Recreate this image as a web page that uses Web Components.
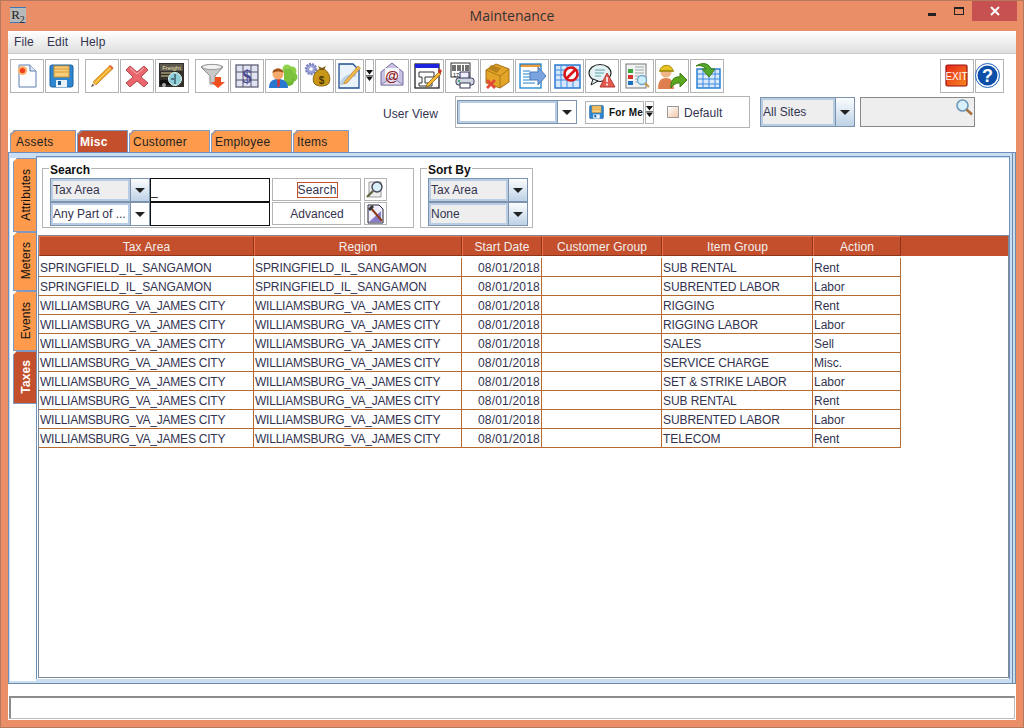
<!DOCTYPE html>
<html>
<head>
<meta charset="utf-8">
<title>Maintenance</title>
<style>
    html, body { margin: 0; padding: 0; width: 1024px; height: 728px; overflow: hidden; }
    body { font: 12px "Liberation Sans", Arial, sans-serif; color: #333; }
</style>
</head>
<body>
<app-window heading="Maintenance">
    <menu-bar></menu-bar>
    <main-toolbar></main-toolbar>
    <view-row></view-row>
    <tab-strip></tab-strip>
    <tab-panel>
        <side-tabs slot="side"></side-tabs>
        <search-bar></search-bar>
        <data-grid></data-grid>
    </tab-panel>
    <status-bar></status-bar>
</app-window>

<script>
const floppy = `<rect x="5" y="6" width="23" height="22" rx="2" fill="#2e86d0" stroke="#17609f"/><rect x="9" y="7" width="15" height="11" fill="#f8cf7e" stroke="#c98f30"/><path d="M10 10h13M10 13h13" stroke="#d9952f"/><rect x="11" y="21" width="11" height="7" fill="#e8f0f8"/><rect x="13" y="22" width="3" height="4" fill="#17609f"/>`;
const ICONS = {
    create: `<path d="M9 6h11l6 6v16H9z" fill="#fbfcff" stroke="#5d7fae"/><path d="M20 6v6h6" fill="#dfe8f4" stroke="#5d7fae"/><circle cx="12.5" cy="11.5" r="4.6" fill="#ffb066"/><circle cx="12.5" cy="11.5" r="2.6" fill="#ef3f1f"/>`,
    save: floppy,
    edit: `<path d="M8 23L25 6.5l3 3L11 26z" fill="#f5a81f" stroke="#a8660a" stroke-width=".6"/><path d="M24 7.5l3 3 1.5-1.5-3-3z" fill="#e9603c"/><path d="M8 23l3 3-5 2z" fill="#ead0a8"/><path d="M6 28l1.6-3 1.4 1.4z" fill="#444"/><path d="M10 24L26 8.5" stroke="#fde08a"/>`,
    remove: `<path d="M10 7l7 6 7-6 4 4-7 7 7 6-4 4-7-6-7 6-4-4 7-6-7-7z" fill="#e8666c" stroke="#b24b50"/><path d="M10 9l7 6 7-6" fill="none" stroke="#f6b3b3"/>`,
    freight: `<rect x="4" y="4" width="25" height="24" fill="#33302b"/><rect x="5" y="5" width="23" height="7" fill="#5c584e"/><text x="16.5" y="10.5" font-family="Liberation Sans" font-size="6" fill="#eee6b8" text-anchor="middle">Freight</text><path d="M6 14h12M6 17h10" stroke="#d8cf95"/><rect x="5" y="21" width="13" height="5" fill="#111"/><circle cx="20" cy="20" r="6.5" fill="#8fd0d8" stroke="#e6f4f5"/><path d="M20 15v10M16 20h3" stroke="#123" fill="none"/><circle cx="9" cy="26" r="2" fill="#aaa"/>`,
    funnel: `<path d="M6 8c3-3 20-3 22 0L20 17v8h-5v-8z" fill="#c9c9c9" stroke="#8c8c8c"/><ellipse cx="17" cy="8" rx="10" ry="2.6" fill="#f2f2f2" stroke="#999"/><path d="M20 18h6v5h4l-7 6-7-6h4z" fill="#f1501e"/>`,
    money: `<rect x="6" y="6" width="22" height="22" fill="#e1e2f2" stroke="#55556b" stroke-width="1.2"/><path d="M13 6v22M21 6v22M6 13h22M6 21h22" stroke="#55556b"/><text x="17" y="24" font-family="Liberation Serif" font-weight="700" font-size="19" fill="#4a4a8f" text-anchor="middle">$</text>`,
    people: `<circle cx="22" cy="10" r="4.5" fill="#92d450"/><circle cx="27" cy="12" r="4.5" fill="#8bcf46"/><circle cx="28" cy="18" r="4.5" fill="#7cc23c"/><circle cx="24" cy="22" r="5" fill="#6fb531"/><rect x="19" y="10" width="8" height="13" fill="#7cc23c"/><path d="M4 29c0-7 4-9 9-9s10 2 10 9z" fill="#2878d0"/><path d="M12 20h3l-.5 8h-2z" fill="#d33"/><circle cx="13" cy="15" r="5.5" fill="#f4ab6c"/><path d="M7.5 14c0-6 11-6 11 0-3-2-8-2-11 0z" fill="#a0521d"/>`,
    charges: `<circle cx="11" cy="10" r="5" fill="#9ca4d8" stroke="#7a82bc" stroke-dasharray="2 1" stroke-width="2.4"/><circle cx="11" cy="10" r="1.8" fill="#fff"/><path d="M20 10c-6 3-8 9-6 14 2 4 13 4 15 0 2-5 0-11-5-14z" fill="#c99718" stroke="#8a6510"/><path d="M18 7l4 2 4-2-2 4h-4z" fill="#7a5a12"/><text x="21.5" y="25" font-family="Liberation Sans" font-weight="700" font-size="10" fill="#4b3505" text-anchor="middle">$</text>`,
    note: `<path d="M4 5h14l6 6v18H4z" fill="#eaf3fb" stroke="#1f4f92" stroke-width="1.3"/><path d="M6 26c2-8 8-10 15-10" fill="none" stroke="#b9d2e6" stroke-width="3"/><path d="M10 22L23 7l2.5 2L12 24l-3.5 1z" fill="#f0b850" stroke="#a8701b" stroke-width=".6"/>`,
    mail: `<path d="M6 13L17 4l11 9v13H6z" fill="#c9c2e3" stroke="#6e6a9c"/><rect x="10" y="9" width="14" height="10" fill="#f8f8fb"/><path d="M6 26l11-8 11 8z" fill="#e2ddf0" stroke="#8c88b0"/><text x="17" y="22" font-family="Liberation Sans" font-weight="700" font-size="14" fill="#8e2020" text-anchor="middle">@</text>`,
    form: `<rect x="5" y="5" width="24" height="24" fill="#fff" stroke="#111" stroke-width="1.2"/><rect x="5" y="5" width="24" height="4" fill="#1d24dc"/><path d="M9 13h15v5h-9v6h7v3H9v-3h3v-6H9z" fill="#fff" stroke="#333"/><path d="M17 25l12-12 2 2-12 12-3 1z" fill="#f2b632" stroke="#8a5a10" stroke-width=".7"/><path d="M28 12l2-2 2 2-2 3z" fill="#d02a1e"/>`,
    barcode: `<rect x="6" y="4" width="19" height="14" fill="#fff" stroke="#333"/><path d="M8 6v6M10 6v6M13 6v6M15 6v6M18 6v6M21 6v6M23 6v6" stroke="#111" stroke-width="1.2"/><text x="8" y="17.5" font-family="Liberation Sans" font-size="5.5" fill="#111">17</text><path d="M15 13h9v7h-9z" fill="#eef" stroke="#335"/><rect x="11" y="19" width="18" height="7" rx="2.5" fill="#cfd6e0" stroke="#335"/><rect x="15" y="24" width="10" height="5" fill="#fff" stroke="#335"/><circle cx="14" cy="22" r="1" fill="#1a9a4a"/>`,
    box: `<path d="M6 11l10-6 13 5v13l-9 6-14-5z" fill="#e3a528" stroke="#a36f12"/><path d="M6 11l14 6 9-7M20 17v12" fill="none" stroke="#ab7a18"/><path d="M11 6l10 3-4 5-9-4z" fill="#b8821c"/><path d="M8 20l3 3 3-3 2 2-3 3 3 3-2 2-3-3-3 3-2-2 3-3-3-3z" fill="#e44a3a"/>`,
    forward: `<path d="M5 5h21v3H5z" fill="#ef9a3a"/><rect x="5" y="5" width="21" height="24" fill="none" stroke="#1d82cb" stroke-width="1.3"/><path d="M8 12h7M8 15h7M8 18h7M8 21h7M8 24h12" stroke="#1d82cb"/><path d="M15 13h8V8l8 9-8 9v-5h-8z" fill="#7aa4e0" stroke="#4d77b8"/>`,
    blocked: `<rect x="5" y="6" width="25" height="23" fill="#d6e7fb" stroke="#1d70cc" stroke-width="1.4"/><path d="M5 11h25M5 16h25M5 21h25M11 6v23M17 6v23M23 6v23" stroke="#3b8ae0"/><circle cx="21" cy="15" r="6.5" fill="#fff" stroke="#d81518" stroke-width="2.6"/><path d="M16.5 19.5l9-9" stroke="#d81518" stroke-width="2.6"/>`,
    alert: `<ellipse cx="15" cy="14" rx="11" ry="8.5" fill="#e3f1f3" stroke="#222" stroke-width="1.1"/><path d="M8 20l-2 6 7-4z" fill="#e3f1f3" stroke="#222"/><path d="M10 11h10M10 14h9M10 17h6" stroke="#5ba5ad"/><path d="M22 14l8 14H15z" fill="#e05a50" stroke="#b43b32"/><path d="M22 18v5M22 24.5v2" stroke="#fff" stroke-width="1.6"/>`,
    report: `<rect x="6" y="5" width="20" height="24" fill="#f2f2f2" stroke="#777"/><rect x="8" y="10" width="5" height="4" fill="#38a83a"/><rect x="8" y="16" width="5" height="4" fill="#d8342c"/><rect x="8" y="22" width="5" height="4" fill="#1d70c0"/><path d="M15 8h9M15 11h9M15 14h9M15 17h4M15 20h3M15 23h3" stroke="#9aa"/><circle cx="22" cy="21" r="4.5" fill="#cfeefb" stroke="#6ca6c8" stroke-width="1.3"/><path d="M25 24l4 4" stroke="#c5964a" stroke-width="2"/>`,
    worker: `<path d="M3 30c0-8 3-11 8-11s7 3 8 11z" fill="#df7f4f"/><circle cx="11" cy="13" r="5.5" fill="#f0b587"/><path d="M5 12c0-7 12-8 13 0z" fill="#e7c320" stroke="#a08a10"/><path d="M4 12h15" stroke="#a08a10" stroke-width="1.4"/><path d="M16 29c-1-7 3-12 9-11v-4l7 7-7 7v-4c-3 0-7 1-9 5z" fill="#5aa820" stroke="#3f7d12"/>`,
    refresh: `<rect x="7" y="10" width="23" height="19" fill="#dbe9fb" stroke="#1d78cf" stroke-width="1.4"/><path d="M7 15h23M7 20h23M7 25h23M13 10v19M19 10v19M25 10v19" stroke="#3b8ae0"/><path d="M6 7c6-4 13-3 15 3h4l-6 8-7-8h4c-2-3-6-4-10-3z" fill="#54a92c" stroke="#3b7d1b"/>`,
    exit: `<defs><linearGradient id="ex" x1="0" y1="0" x2="1" y2="1"><stop offset="0" stop-color="#e8241c"/><stop offset="1" stop-color="#f58a1e"/></linearGradient></defs><rect x="6" y="6" width="21" height="21" rx="1.5" fill="url(#ex)" stroke="#9a0f10" stroke-width="1.2"/><text x="16.5" y="20.5" font-family="Liberation Sans" font-size="10" fill="#fff" text-anchor="middle">EXIT</text>`,
    help: `<circle cx="12.5" cy="16.5" r="12" fill="#fff" stroke="#1a62c0"/><circle cx="12.5" cy="16.5" r="10" fill="#0d4fa8"/><text x="12.5" y="22.5" font-family="Liberation Sans" font-weight="700" font-size="18" fill="#fff" text-anchor="middle">?</text>`
};

const triangles = `<svg width="7" height="12" viewBox="0 0 7 12"><path d="M0 0h7L3.5 4.5zM0 6.5h7L3.5 11z" fill="#111"/><path d="M0 5.5h7" stroke="#111" stroke-width=".6"/></svg>`;

const windowTemplate = document.createElement('template');
windowTemplate.innerHTML = `
    <style>
        :host { display: flex; flex-direction: column; width: 1024px; height: 728px; box-sizing: border-box;
            background: #e98e66; border: 1px solid #b5785c; }
        .title { display: flex; align-items: flex-start; height: 30px; flex: none; position: relative; }
        .logo { width: 16px; height: 16px; margin: 6px 0 0 9px; background: #b9b9b9; border-top: 1px solid #3c78b8; border-bottom: 1px solid #3c78b8;
            box-sizing: border-box; font: 13px/14px "Liberation Serif", serif; color: #222; text-align: center; }
        .name { position: absolute; left: 0; right: 0; top: 5px; text-align: center; font: 14px/20px "Open Sans", sans-serif; color: #333; }
        .caps { margin-left: auto; margin-right: 6px; display: flex; align-items: flex-start; }
        .min { width: 8px; height: 3px; background: #222; margin: 12px 0 0; }
        .max { width: 8px; height: 5px; border: 1px solid #222; border-top-width: 2px; margin: 6px 0 0 18px; }
        .close { width: 45px; height: 20px; background: #c75050; margin: 0 0 0 8px; display: flex; align-items: center; justify-content: center; }
        .client { flex: 1; margin: 0 7px 7px; background: #fff; display: flex; flex-direction: column; min-height: 0; }
    </style>
    <div class="title">
        <div class="logo">R<sub style="font-size:10px;line-height:0">2</sub></div>
        <div class="name"></div>
        <div class="caps">
            <div class="min"></div><div class="max"></div>
            <div class="close"><svg width="10" height="10" viewBox="0 0 10 10"><path d="M1 1l8 8M9 1l-8 8" stroke="#fff" stroke-width="2"/></svg></div>
        </div>
    </div>
    <div class="client"><slot></slot></div>
`;
class AppWindow extends HTMLElement {
    constructor() {
        super();
        this.attachShadow({ mode: 'open' }).append(windowTemplate.content.cloneNode(true));
    }
    connectedCallback() {
        this.shadowRoot.querySelector('.name').textContent = this.getAttribute('heading');
    }
}
customElements.define('app-window', AppWindow);

class MenuBar extends HTMLElement {
    constructor() {
        super();
        this.attachShadow({ mode: 'open' }).innerHTML = `
            <style>
                :host { display: flex; height: 22px; flex: none; background: linear-gradient(#fff, #dfdfdf); border-bottom: 1px solid #c9c9c9;
                    padding-left: 6px; gap: 13px; font: 12px/22px "Liberation Sans", sans-serif; color: #333350; letter-spacing: .15px; }
                span:last-child { margin-left: -1px; }
            </style>
            <span>File</span><span>Edit</span><span>Help</span>`;
    }
}
customElements.define('menu-bar', MenuBar);

class ToolBtn extends HTMLElement {
    constructor() {
        super();
        this.attachShadow({ mode: 'open' });
    }
    connectedCallback() {
        const w = this.getAttribute('w') || 34;
        this.shadowRoot.innerHTML = `
            <style>
                :host { display: block; flex: none; width: ${w}px; height: 34px; box-sizing: border-box; border: 1px solid #b4b4b4; background: #fff; }
                svg { display: block; margin: -1px; }
            </style>
            <svg width="${w}" height="34" viewBox="0 0 ${w} 34">${ICONS[this.getAttribute('icon')] || ''}</svg>`;
    }
}
customElements.define('tool-btn', ToolBtn);

class MainToolbar extends HTMLElement {
    constructor() {
        super();
        const group = names => names.split(' ').map(n => `<tool-btn icon="${n}"></tool-btn>`).join('');
        this.attachShadow({ mode: 'open' }).innerHTML = `
            <style>
                :host { display: flex; flex: none; height: 34px; padding: 5px 12px 1px 2px; gap: 1px; }
                .sep { margin-left: 5px; }
                .more { width: 9px; height: 34px; box-sizing: border-box; border: 1px solid #b4b4b4; display: flex; align-items: center; justify-content: center; }
                .end { margin-left: auto; }
            </style>
            ${group('create save')}
            <tool-btn class="sep" icon="edit"></tool-btn><tool-btn icon="remove"></tool-btn><tool-btn icon="freight"></tool-btn>
            <tool-btn class="sep" icon="funnel"></tool-btn>${group('money people charges')}
            <tool-btn icon="note" w="29"></tool-btn>
            <div class="more">${triangles}</div>
            ${group('mail form barcode box forward blocked alert report worker refresh')}
            <tool-btn class="end" icon="exit"></tool-btn>
            <tool-btn icon="help" w="29"></tool-btn>`;
    }
}
customElements.define('main-toolbar', MainToolbar);

class ComboBox extends HTMLElement {
    constructor() {
        super();
        this.attachShadow({ mode: 'open' });
    }
    connectedCallback() {
        const plain = this.hasAttribute('plain');
        this.shadowRoot.innerHTML = `
            <style>
                :host { display: flex; flex: none; box-sizing: border-box; height: 24px; border: 1px solid #7d93ad; background: #fff; font: 12px "Liberation Sans", sans-serif; color: #333350; }
                .field { flex: 1; min-width: 0; box-sizing: border-box; border: 2px solid #b8cde4; background: ${plain ? '#fff' : '#eee'};
                    display: flex; align-items: center; white-space: nowrap; overflow: hidden; }
                .arrow { flex: none; box-sizing: border-box; width: 19px; border-left: 1px solid #7d93ad; background: ${plain ? '#fff' : 'linear-gradient(#fbfdfe, #bdd1e6)'};
                    display: flex; align-items: center; justify-content: center; }
                .arrow i { width: 0; height: 0; border: 5px solid transparent; border-top-color: #222; border-bottom: 0; }
            </style>
            <div class="field">${this.getAttribute('value') || ''}</div>
            <div class="arrow"><i></i></div>`;
    }
}
customElements.define('combo-box', ComboBox);

class ViewRow extends HTMLElement {
    constructor() {
        super();
        this.attachShadow({ mode: 'open' }).innerHTML = `
            <style>
                :host { display: flex; flex: none; height: 32px; padding: 2px 0; font: 12px "Liberation Sans", sans-serif; color: #333350; }
                .label { margin-left: 375px; width: 72px; line-height: 36px; letter-spacing: .05px; }
                .box { box-sizing: border-box; width: 295px; height: 32px; border: 1px solid #b4b4b4; display: flex; align-items: center; padding-left: 1px; }
                .box combo-box { width: 120px; }
                .forme { margin-left: 8px; width: 59px; height: 23px; box-sizing: border-box; border: 1px solid #b4b4b4; padding-left: 3px; display: flex; align-items: center; font: bold 10px "Liberation Sans", sans-serif; letter-spacing: .2px; color: #111; white-space: nowrap; }
                .forme svg { margin-right: 5px; flex: none; }
                .more { margin-left: 1px; width: 9px; height: 23px; box-sizing: border-box; border: 1px solid #b4b4b4; display: flex; align-items: center; justify-content: center; }
                .check { margin-left: 13px; width: 12px; height: 12px; box-sizing: border-box; border: 1px solid #9a9a9a; background: linear-gradient(135deg, #fff, #f2c7a8); }
                .dft { margin: 2px 0 0 5px; letter-spacing: .05px; }
                .sites { margin: 1px 0 0 10px; width: 95px; height: 30px; }
                .find { margin: 1px 0 0 5px; width: 115px; height: 30px; box-sizing: border-box; border: 1px solid #888; background: #eee; display: flex; justify-content: flex-end; }
            </style>
            <div class="label">User View</div>
            <div class="box">
                <combo-box plain></combo-box>
                <div class="forme"><svg width="15" height="16" viewBox="4 5 25 24">${floppy}</svg>For Me</div>
                <div class="more">${triangles}</div>
                <div class="check"></div><div class="dft">Default</div>
            </div>
            <combo-box class="sites" value="All Sites"></combo-box>
            <div class="find"><svg width="19" height="19" viewBox="0 0 19 19"><circle cx="7.5" cy="7.5" r="5.5" fill="#d8f0fb" stroke="#6f98b8" stroke-width="1.6"/><path d="M11.5 11.5l5.5 5" stroke="#a6703a" stroke-width="2.6"/></svg></div>`;
    }
}
customElements.define('view-row', ViewRow);

class TabStrip extends HTMLElement {
    constructor() {
        super();
        const tabs = [['Assets', 66, 5], ['Misc', 51, 2, true], ['Customer', 81, 3], ['Employee', 81, 3], ['Items', 56, 3]];
        this.attachShadow({ mode: 'open' }).innerHTML = `
            <style>
                :host { display: flex; flex: none; height: 22px; padding-left: 2px; gap: 1px; font: 12px "Liberation Sans", sans-serif; color: #222; letter-spacing: .25px; }
                .tab { box-sizing: border-box; height: 22px; padding-top: 4px; background: #fd9a4c; border: 1px solid #7d99c4; border-bottom: 0; clip-path: polygon(4px 0, 100% 0, 100% 100%, 0 100%, 0 4px); position: relative; }
                .tab.on { background: #c44f2d; color: #fff; font-weight: bold; }
                .tab::before { content: ""; position: absolute; left: -1px; top: 1px; width: 6px; height: 1px; background: #7d99c4; transform: rotate(-45deg); }
            </style>
            ${tabs.map(([t, w, p, on]) => `<div class="tab${on ? ' on' : ''}" style="width:${w}px;padding-left:${p}px">${t}</div>`).join('')}`;
    }
}
customElements.define('tab-strip', TabStrip);

const panelTemplate = document.createElement('template');
panelTemplate.innerHTML = `
    <style>
        :host { display: flex; flex: none; height: 532px; box-sizing: border-box; background: #c9ddf3;
            border: 1px solid #6d8ebd; border-right-color: #6f8aa6; border-bottom-color: #6f8aa6; padding: 3px 3px 2px 1px;
            box-shadow: inset -2px 0 0 #c9ddf3, inset -3px 0 0 #6f8aa6; }
        .side { width: 26px; flex: none; background: #fff; margin-top: 2px; }
        .body { flex: 1; min-width: 0; display: flex; flex-direction: column; background: #fff; border: 1px solid #6d8ebd; border-bottom: 0;
            margin: 0 2px 2px 0; padding-left: 1px; box-shadow: inset 0 1px 0 #c9ddf3; }
    </style>
    <div class="side"><slot name="side"></slot></div>
    <div class="body"><slot></slot></div>
`;
class TabPanel extends HTMLElement {
    constructor() {
        super();
        this.attachShadow({ mode: 'open' }).append(panelTemplate.content.cloneNode(true));
    }
}
customElements.define('tab-panel', TabPanel);

class SideTabs extends HTMLElement {
    constructor() {
        super();
        const tabs = [['Attributes', 74], ['Meters', 59], ['Events', 60], ['Taxes', 53, true]];
        this.attachShadow({ mode: 'open' }).innerHTML = `
            <style>
                :host { display: flex; flex-direction: column; margin-left: 3px; font: 12px "Liberation Sans", sans-serif; color: #111; letter-spacing: .1px; }
                .tab { box-sizing: border-box; width: 23px; padding-left: 1px; background: #fd9a4c; border: 1px solid #7d99c4; border-right: 0; clip-path: polygon(4px 0, 100% 0, 100% 100%, 0 100%, 0 4px);
                    writing-mode: vertical-rl; display: flex; align-items: center; justify-content: center; }
                .tab span { display: block; transform: rotate(180deg); margin-top: -1px; }
                .tab.on { background: #c44f2d; color: #fff; font-weight: bold; }
            </style>
            ${tabs.map(([t, h, on]) => `<div class="tab${on ? ' on' : ''}" style="height:${h}px"><span>${t}</span></div>`).join('')}`;
    }
}
customElements.define('side-tabs', SideTabs);

class SearchBar extends HTMLElement {
    constructor() {
        super();
        const findIcon = `<svg width="23" height="23" viewBox="0 0 23 23"><path d="M5 4h12v15H5z" fill="#eee" stroke="#999"/><circle cx="13" cy="9" r="5" fill="#d8eef8" stroke="#445" stroke-width="1.4"/><path d="M9 13l-6 6" stroke="#664" stroke-width="2.4"/></svg>`;
        const advIcon = `<svg width="23" height="23" viewBox="0 0 23 23"><path d="M4 3h11l4 4v14H4z" fill="#eef" stroke="#223"/><path d="M5 20L17 9v11z" fill="#8a7cc8"/><path d="M6 5l12 14" stroke="#8a3a1a" stroke-width="2"/><path d="M4 7l4-4 2 2-4 4z" fill="#333"/></svg>`;
        this.attachShadow({ mode: 'open' }).innerHTML = `
            <style>
                :host { display: flex; flex: none; height: 78px; padding: 3px 0 0 4px; box-sizing: border-box; gap: 6px; font: 12px "Liberation Sans", sans-serif; color: #333350; }
                fieldset { margin: 0; box-sizing: border-box; height: 68px; border: 1px solid #b4b4b4; padding: 1px 4px 0 7px; display: flex; }
                legend { font: bold 12px/14px "Liberation Sans", sans-serif; color: #111; padding: 3px 1px 0; margin-left: -1px; }
                .pile { display: flex; flex-direction: column; }
                .pile combo-box { width: 100px; }
                .input { width: 120px; height: 24px; box-sizing: border-box; border: 1px solid #111; background: #fff; font: 12px/25px "Liberation Sans", sans-serif; color: #111; }
                .btn { margin-left: 2px; width: 89px; height: 23px; box-sizing: border-box; border: 1px solid #b4b4b4; display: flex; align-items: center; justify-content: center; margin-bottom: 1px; padding: 1px 0 0 1px; }
                .focus { border: 1px solid #c44f2d; width: 41px; height: 16px; box-sizing: border-box; text-align: center; line-height: 15px; letter-spacing: .15px; }
                .ico { margin-left: 3px; width: 23px; height: 23px; box-sizing: border-box; border: 1px solid #b4b4b4; margin-bottom: 1px; }
                .ico svg { display: block; margin: -1px; }
            </style>
            <fieldset style="width:372px"><legend>Search</legend>
                <div class="pile"><combo-box value="Tax Area"></combo-box><combo-box plain value="Any Part of ..."></combo-box></div>
                <div class="pile"><div class="input">_</div><div class="input"></div></div>
                <div class="pile"><div class="btn"><span class="focus">Search</span></div><div class="btn">Advanced</div></div>
                <div class="pile"><div class="ico">${findIcon}</div><div class="ico">${advIcon}</div></div>
            </fieldset>
            <fieldset style="width:113px"><legend>Sort By</legend>
                <div class="pile"><combo-box value="Tax Area"></combo-box><combo-box value="None"></combo-box></div>
            </fieldset>`;
    }
}
customElements.define('search-bar', SearchBar);

const WB = 'WILLIAMSBURG_VA_JAMES CITY', SP = 'SPRINGFIELD_IL_SANGAMON';
const ROWS = [
    [SP, 'SUB RENTAL', 'Rent'], [SP, 'SUBRENTED LABOR', 'Labor'], [WB, 'RIGGING', 'Rent'], [WB, 'RIGGING LABOR', 'Labor'],
    [WB, 'SALES', 'Sell'], [WB, 'SERVICE CHARGE', 'Misc.'], [WB, 'SET &amp; STRIKE LABOR', 'Labor'], [WB, 'SUB RENTAL', 'Rent'],
    [WB, 'SUBRENTED LABOR', 'Labor'], [WB, 'TELECOM', 'Rent']
];
class DataGrid extends HTMLElement {
    constructor() {
        super();
        const heads = ['Tax Area', 'Region', 'Start Date', 'Customer Group', 'Item Group', 'Action'];
        const cells = ([area, item, action]) => {
            const cls = area == WB ? 'c wb' : 'c sp';
            return `<div class="${cls}">${area}</div><div class="${cls}">${area}</div><div class="c d">08/01/2018</div><div class="c"></div>
                <div class="c sp">${item}</div><div class="c">${action}</div>`;
        };
        this.attachShadow({ mode: 'open' }).innerHTML = `
            <style>
                :host { display: block; flex: 1; min-height: 0; box-sizing: border-box; border: 1px solid #7f8a94; margin-bottom: 1px; font: 12px "Liberation Sans", sans-serif; color: #333350; overflow: hidden; }
                .head { height: 20px; margin-bottom: 2px; background: #c44f2d; }
                .g { display: grid; grid-template-columns: 215px 208px 80px 120px 151px 88px; width: 862px; }
                .h { box-sizing: border-box; height: 20px; border: 1px solid; border-color: #ef6d47 #8f3519 #8f3519 #ef6d47; text-align: center; line-height: 20px; color: #f3f0ee; white-space: nowrap; letter-spacing: .1px; }
                .c { box-sizing: border-box; height: 19px; border-right: 1px solid #b56a30; border-bottom: 1px solid #b56a30; padding-left: 1px; line-height: 21px; white-space: nowrap; overflow: hidden; }
                .sp { letter-spacing: -.08px; }
                .wb { letter-spacing: -.23px; }
                .d { text-align: right; padding-right: 1px; letter-spacing: .2px; }
            </style>
            <div class="head"><div class="g">${heads.map(h => `<div class="h">${h}</div>`).join('')}</div></div>
            <div class="g">${ROWS.map(cells).join('')}</div>`;
    }
}
customElements.define('data-grid', DataGrid);

class StatusBar extends HTMLElement {
    constructor() {
        super();
        this.attachShadow({ mode: 'open' }).innerHTML = `
            <style>
                :host { display: block; flex: none; height: 23px; box-sizing: border-box; margin: 12px 1px 1px 1px; background: #fff; border: 2px solid #8c8c8c; border-right: 1px solid #bcbcbc; border-bottom: 1px solid #bcbcbc; }
            </style>`;
    }
}
customElements.define('status-bar', StatusBar);
</script>
</body>
</html>
